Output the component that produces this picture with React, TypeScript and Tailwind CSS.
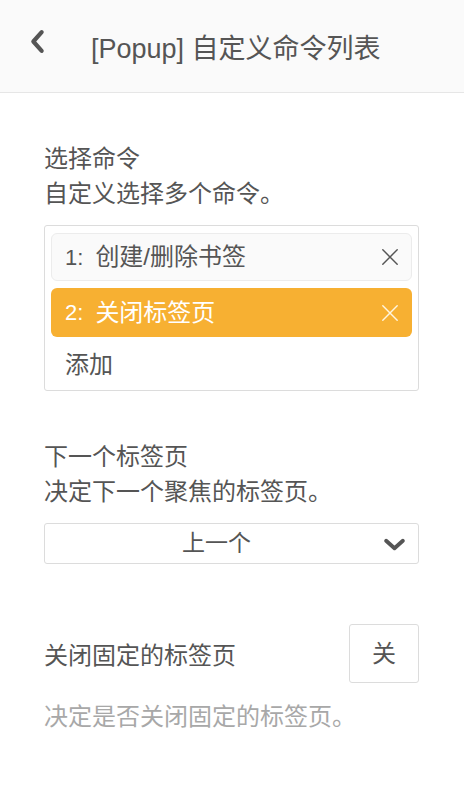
import React, { useState } from "react";

const font = { fontFamily: '"Liberation Sans", "Noto Sans CJK SC", sans-serif' };

function XIcon({ className }: { className?: string }) {
    return (
        <svg viewBox="0 0 20 20" className={className} fill="none" stroke="currentColor" strokeWidth="1.6" strokeLinecap="round">
            <path d="M2 2 L18 18 M18 2 L2 18" />
        </svg>
    );
}

export default function App() {
    const [commands, setCommands] = useState(["创建/删除书签", "关闭标签页"]);
    const [active] = useState(1);

    return (
        <div className="w-[464px] min-h-[808px] bg-white text-[#555]" style={font}>
            {/* header */}
            <div className="h-[93px] bg-[#fafafa] border-b border-[#e6e6e6] flex items-center">
                <button className="w-[74px] h-full flex items-center justify-center pb-[10px] text-[#555]">
                    <svg viewBox="0 0 16 24" className="w-[17px] h-[25px]" fill="none" stroke="currentColor" strokeWidth="4" strokeLinecap="round" strokeLinejoin="round">
                        <path d="M12 3 L4 12 L12 21" />
                    </svg>
                </button>
                <h1 className="pl-[17px] text-[27px] leading-none text-[#555] pt-[6px]">[Popup] 自定义命令列表</h1>
            </div>

            <div className="pl-[44px] pr-[45px] pt-[48px]">
                {/* select commands */}
                <div className="text-[24px] leading-[35px]">选择命令</div>
                <div className="text-[24px] leading-[35px]">自定义选择多个命令。</div>
                <div className="mt-[14px] border border-[#dcdcdc] rounded-[3px] px-[6px] pt-[7px] pb-[7px] flex flex-col gap-[7px]">
                    {commands.map((c, i) => (
                        <div
                            key={i}
                            className={
                                i === active
                                    ? "h-[49px] rounded-[6px] bg-[#f7b032] text-white flex items-center pl-[14px] pr-[13px]"
                                    : "h-[48px] rounded-[6px] bg-[#fafafa] border border-[#ececec] text-[#555] flex items-center pl-[13px] pr-[12px]"
                            }
                        >
                            <span className="text-[22px]">{i + 1}:</span>
                            <span className="ml-[12px] text-[24px] flex-1">{c}</span>
                            <button onClick={() => setCommands(commands.filter((_, j) => j !== i))}>
                                <XIcon className={i === active ? "w-[18px] h-[18px] text-[#fff5df]" : "w-[18px] h-[18px] text-[#555]"} />
                            </button>
                        </div>
                    ))}
                    <div className="h-[39px] flex items-center pl-[14px] pt-[2px] text-[24px]">添加</div>
                </div>

                {/* next tab */}
                <div className="mt-[48px] text-[24px] leading-[35px]">下一个标签页</div>
                <div className="text-[24px] leading-[35px]">决定下一个聚焦的标签页。</div>
                <div className="mt-[14px] h-[41px] border border-[#dcdcdc] rounded-[3px] flex items-center relative">
                    <span className="flex-1 text-center text-[23px] pr-[30px]">上一个</span>
                    <svg viewBox="0 0 24 14" className="absolute right-[12px] top-[14px] w-[23px] h-[13px] text-[#555]" fill="none" stroke="currentColor" strokeWidth="4.2" strokeLinecap="round" strokeLinejoin="round">
                        <path d="M3 3 L12 11 L21 3" />
                    </svg>
                </div>

                {/* close pinned */}
                <div className="mt-[60px] flex items-center justify-between">
                    <span className="text-[24px] pt-[4px]">关闭固定的标签页</span>
                    <button className="w-[70px] h-[59px] border border-[#dcdcdc] rounded-[3px] text-[24px] text-[#555] bg-white">关</button>
                </div>
                <div className="mt-[16px] text-[24px] text-[#a8a8a8]">决定是否关闭固定的标签页。</div>
            </div>
        </div>
    );
}
